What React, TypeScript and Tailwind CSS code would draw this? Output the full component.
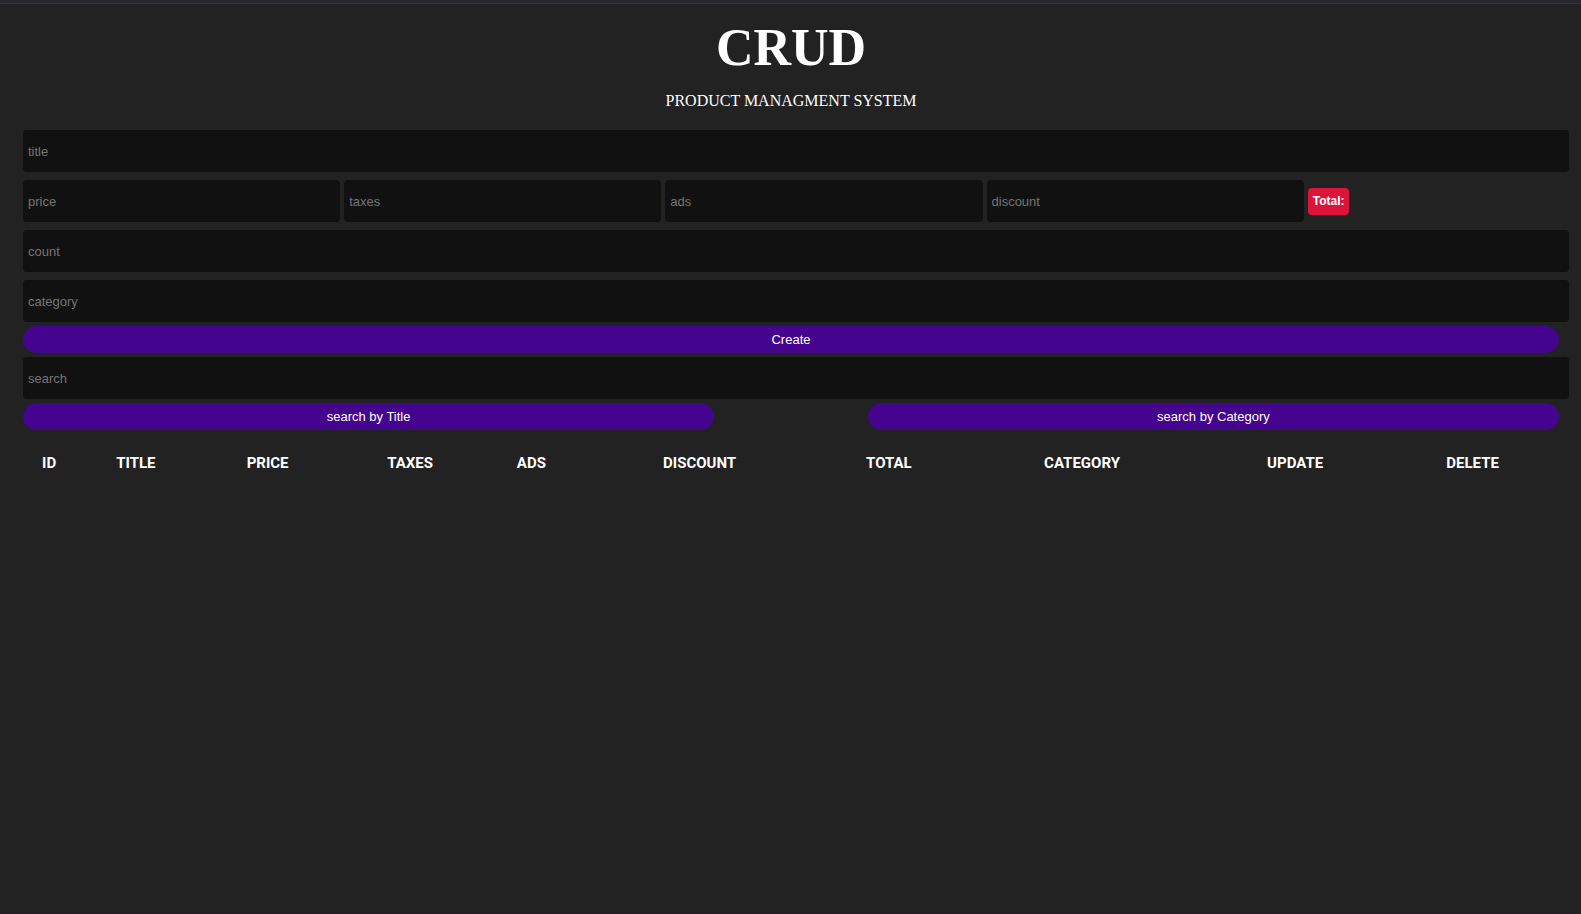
import React from "react";

const fieldBase =
  "h-[42px] rounded-sm bg-[#111] px-[5px] text-[13px] text-white outline-none placeholder:text-[#757575] focus:bg-black";
const wideField = `${fieldBase} -mr-[10px]`;
const pill =
  "h-[27px] cursor-pointer rounded-full bg-[#45048d] text-[13px] text-white hover:bg-[#390374]";

const priceFields = ["price", "taxes", "ads", "discount"];

const columns = [
  { label: "ID", width: "w-[3.4%]" },
  { label: "TITLE", width: "w-[7.9%]" },
  { label: "PRICE", width: "w-[9.25%]" },
  { label: "TAXES", width: "w-[9.3%]" },
  { label: "ADS", width: "w-[6.5%]" },
  { label: "DISCOUNT", width: "w-[15.4%]" },
  { label: "TOTAL", width: "w-[9.25%]" },
  { label: "CATEGORY", width: "w-[15.9%]" },
  { label: "UPDATE", width: "w-[11.85%]" },
  { label: "DELETE", width: "w-[11.25%]" },
];

export default function App() {
  return (
    <div className="flex min-h-screen flex-col border-b-2 border-[#231f22] bg-[#222] font-['Liberation_Sans',Arial,sans-serif] text-white">
      <div className="h-1 border-b border-[#333336] bg-[#26262b]" />
      <main className="flex flex-col pr-[22px] pl-[23px]">
        <header className="text-center font-['Liberation_Serif','Times_New_Roman',serif]">
          <h1 className="mt-3 text-[52px] leading-[64px] font-bold">CRUD</h1>
          <p className="mt-[9px] text-base leading-6">PRODUCT MANAGMENT SYSTEM</p>
        </header>

        <form className="mt-[17px] flex flex-col" onSubmit={(e) => e.preventDefault()}>
          <div className="flex flex-col gap-2">
            <input type="text" aria-label="title" placeholder="title" className={wideField} />
            <div className="flex items-center gap-1">
              {priceFields.map((name) => (
                <input
                  key={name}
                  type="number"
                  aria-label={name}
                  placeholder={name}
                  className={`${fieldBase} w-[20.65%]`}
                />
              ))}
              <output className="flex h-[27px] items-center rounded-sm bg-[#dc143c] px-[5px] text-xs font-bold">
                Total:
              </output>
            </div>
            <input type="number" aria-label="count" placeholder="count" className={wideField} />
            <input type="text" aria-label="category" placeholder="category" className={wideField} />
          </div>
          <button type="submit" className={`${pill} mt-1`}>
            Create
          </button>
        </form>

        <section className="mt-1 flex flex-col gap-1">
          <input type="text" aria-label="search" placeholder="search" className={wideField} />
          <div className="flex justify-between">
            <button type="button" className={`${pill} w-[45%]`}>
              search by Title
            </button>
            <button type="button" className={`${pill} w-[45%]`}>
              search by Category
            </button>
          </div>
        </section>

        <table className="mt-[21px] w-full table-fixed text-center font-[Roboto,'Liberation_Sans',sans-serif]">
          <thead>
            <tr>
              {columns.map((c) => (
                <th key={c.label} scope="col" className={`${c.width} text-[15px] leading-6 font-bold`}>
                  {c.label}
                </th>
              ))}
            </tr>
          </thead>
          <tbody />
        </table>
      </main>
    </div>
  );
}
